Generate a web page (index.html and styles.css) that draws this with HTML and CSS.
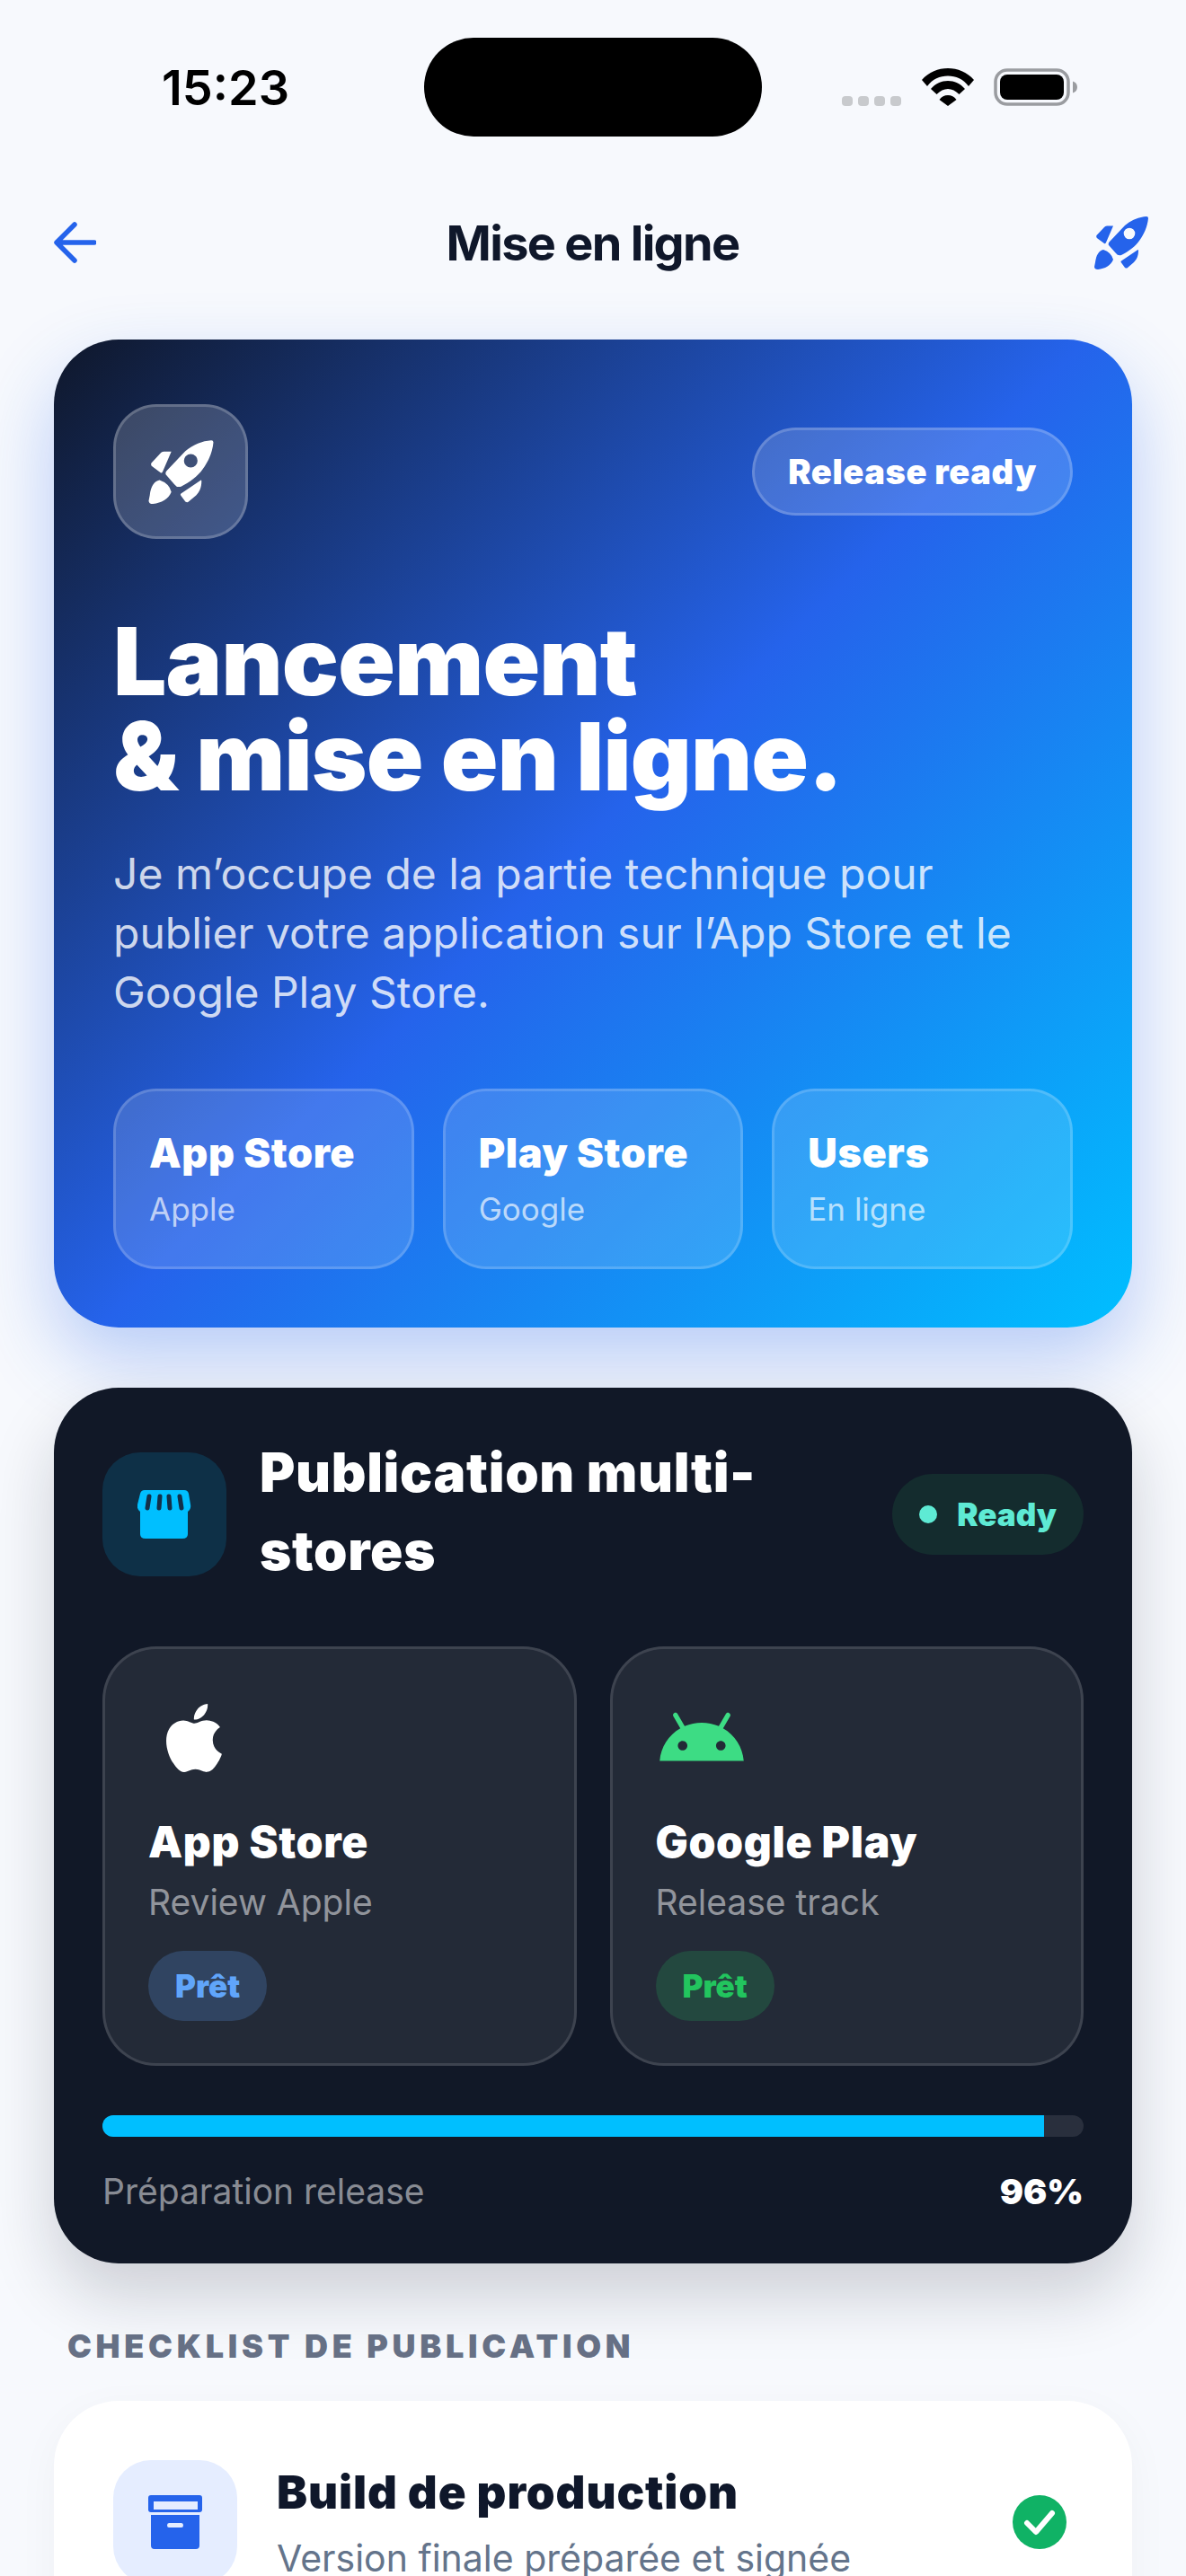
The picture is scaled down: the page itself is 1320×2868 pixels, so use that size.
FILE: index.html
```html
<!DOCTYPE html>
<html>

	<head>
		<meta charset="UTF-8">
		<title>Mise en ligne</title>
		<link rel="stylesheet" href="styles.css">
	</head>

	<body>
		<div class="status">
			<div class="time">15:23</div>
			<div class="island"></div>
			<div class="sys">
				<div class="dots"><i></i><i></i><i></i><i></i></div>
				<svg class="wifi" viewBox="0 0 58 42"><path d="M0 13C8 4 18 0 29 0s21 4 29 13l-6 7C46 12 38 8.500 29 8.500S12 12 6 20z"/><path d="M10 23c5-6 12-9 19-9s14 3 19 9l-6.500 6c-4-4-8-6-12.500-6s-8.500 2-12.500 6z"/><path d="M19.500 35c2.500-3.500 5.500-5 9.500-5s7 1.500 9.500 5L29 42z"/></svg>
				<svg class="battery" viewBox="0 0 93 42"><rect x="2" y="2" width="81" height="38" rx="13" fill="none" stroke="#9a9ca0" stroke-width="3.500"/><rect x="7" y="7" width="71" height="28" rx="8"/><path d="M88 14.500c3 1 5 3 5 6.500s-2 5.500-5 6.500z" fill="#9a9ca0"/></svg>
			</div>
		</div>

		<div class="nav">
			<svg class="back" viewBox="0 0 47 46"><path d="M45 23H4M23 3L3 23l20 20"/></svg>
			<div class="nav-title">Mise en ligne</div>
			<svg class="rocket nav-rocket" viewBox="0 0 60 60"><path fill-rule="evenodd" d="M58 1C50 1.500 41 5 34 11L17 29q-2 2-1 4l8 9q2 3 6 2C38 40 46 34 50 28C55 21 59 13 60 3q0-2-2-2zM39 13.700a6.300 6.300 0 1 1 0 12.600a6.300 6.300 0 1 1 0-12.600z"/><path d="M21 11.500H14q-2 0-3 1.500L2.500 22q-1 2 1 3.500L11 31q1 1 2-1zM48.500 38L30 50.500q-1 1 0 2L34 58q2 1 3 0L44 52C47 49 49 45 49 39q0-1-.5-1zM10 38C5 39 2 44 1 52L0 57Q0 60 4 60C12 59 18 56 21 49Q19 41 10 38z"/></svg>
		</div>

		<div class="hero">
			<div class="hero-top">
				<div class="hero-icon">
					<svg class="rocket" viewBox="0 0 60 60"><path fill-rule="evenodd" d="M58 1C50 1.500 41 5 34 11L17 29q-2 2-1 4l8 9q2 3 6 2C38 40 46 34 50 28C55 21 59 13 60 3q0-2-2-2zM39 13.700a6.300 6.300 0 1 1 0 12.600a6.300 6.300 0 1 1 0-12.600z"/><path d="M21 11.500H14q-2 0-3 1.500L2.500 22q-1 2 1 3.500L11 31q1 1 2-1zM48.500 38L30 50.500q-1 1 0 2L34 58q2 1 3 0L44 52C47 49 49 45 49 39q0-1-.5-1zM10 38C5 39 2 44 1 52L0 57Q0 60 4 60C12 59 18 56 21 49Q19 41 10 38z"/></svg>
				</div>
				<div class="hero-badge">Release ready</div>
			</div>
			<h1>Lancement<br>&amp; mise en ligne.</h1>
			<p class="hero-text">Je m’occupe de la partie technique pour publier votre application sur l’App Store et le Google Play Store.</p>
			<div class="stats">
				<div class="stat"><b>App Store</b><span>Apple</span></div>
				<div class="stat"><b>Play Store</b><span>Google</span></div>
				<div class="stat"><b>Users</b><span>En ligne</span></div>
			</div>
		</div>

		<div class="publish">
			<div class="pub-head">
				<div class="pub-icon">
					<svg viewBox="0 0 60 56"><path d="M8 1h44q4 0 5 4l2 12q1 5-3 8v25q0 5-6 5H9q-6 0-6-5V25q-4-3-3-8L3 5q1-4 5-4z"/><path class="slots" d="M13 8l-2 13M25 8l-1 13M35 8l1 13M47 8l2 13"/></svg>
				</div>
				<div class="pub-title">Publication multi-stores</div>
				<div class="ready"><i></i>Ready</div>
			</div>
			<div class="stores">
				<div class="store">
					<div class="store-icon">
						<svg class="apple" viewBox="0 0 24 24"><path d="M12.152 6.896c-.948 0-2.415-1.078-3.96-1.04-2.04.027-3.91 1.183-4.961 3.014-2.117 3.675-.546 9.103 1.519 12.09 1.013 1.454 2.208 3.09 3.792 3.039 1.52-.065 2.09-.987 3.935-.987 1.831 0 2.35.987 3.96.948 1.637-.026 2.676-1.48 3.676-2.948 1.156-1.688 1.636-3.325 1.662-3.415-.039-.013-3.182-1.221-3.22-4.857-.026-3.04 2.48-4.494 2.597-4.559-1.429-2.09-3.623-2.324-4.39-2.376-2-.156-3.675 1.09-4.61 1.09zM15.53 3.83c.843-1.012 1.4-2.427 1.245-3.83-1.207.052-2.662.805-3.532 1.818-.78.896-1.454 2.338-1.273 3.714 1.338.104 2.715-.688 3.559-1.701"/></svg>
					</div>
					<div class="store-name">App Store</div>
					<div class="store-sub">Review Apple</div>
					<div class="pill pill-blue">Prêt</div>
				</div>
				<div class="store">
					<div class="store-icon">
						<svg class="android" viewBox="0 0 24 24"><path d="M17.6 9.48l1.84-3.18c.16-.31.04-.69-.26-.85-.29-.15-.65-.06-.83.22l-1.88 3.24c-2.86-1.21-6.08-1.21-8.94 0L5.65 5.67c-.19-.29-.58-.38-.87-.2-.28.18-.37.54-.22.83L6.4 9.48C3.3 11.25 1.28 14.44 1 18h22c-.28-3.56-2.3-6.75-5.4-8.52zM7 15.25c-.69 0-1.25-.56-1.25-1.25s.56-1.25 1.25-1.25 1.25.56 1.25 1.25-.56 1.25-1.25 1.25zm10 0c-.69 0-1.25-.56-1.25-1.25s.56-1.25 1.25-1.25 1.25.56 1.25 1.25-.56 1.25-1.25 1.25z"/></svg>
					</div>
					<div class="store-name">Google Play</div>
					<div class="store-sub">Release track</div>
					<div class="pill pill-green">Prêt</div>
				</div>
			</div>
			<div class="progress"><div class="bar" style="width: 96%"></div></div>
			<div class="progress-row"><span>Préparation release</span><b>96%</b></div>
		</div>

		<div class="section-label">CHECKLIST DE PUBLICATION</div>

		<div class="checklist">
			<div class="check-row">
				<div class="check-icon">
					<svg viewBox="0 0 60 60"><path d="M3 0h54q3 0 3 3v13q0 3-3 3H3q-3 0-3-3V3q0-3 3-3zm3 7v9h49V7z" fill-rule="evenodd"/><path d="M3 22h54v34q0 4-4 4H7q-4 0-4-4zm20 9q-2 0-2 2.500t2 2.500h14q2 0 2-2.500T37 31z" fill-rule="evenodd"/></svg>
				</div>
				<div class="check-text">
					<div class="check-title">Build de production</div>
					<div class="check-sub">Version finale préparée et signée</div>
				</div>
				<svg class="tick" viewBox="0 0 60 60"><circle cx="30" cy="30" r="30"/><path d="M16 31l10 10 18-21"/></svg>
			</div>
		</div>
	</body>

</html>
```

FILE: styles.css
```css
* {
	margin: 0;
	padding: 0;
	box-sizing: border-box;
}

body {
	width: 1320px;
	height: 2868px;
	overflow: hidden;
	background: #f7f9fd;
	font-family: Inter, "Liberation Sans", sans-serif;
	color: #0f172a;
}

svg {
	display: block;
}

.status {
	display: grid;
	grid-template-columns: 1fr 376px 1fr;
	align-items: center;
	padding-top: 42px;
}

.time {
	padding-left: 180px;
	font-size: 54px;
	font-weight: 600;
	color: #000;
}

.island {
	height: 110px;
	border-radius: 55px;
	background: #000;
}

.sys {
	display: flex;
	align-items: flex-end;
	padding-left: 89px;
	height: 42px;
}

.dots {
	display: flex;
	gap: 6px;
	margin-right: 23px;
}

.dots i {
	width: 12px;
	height: 11px;
	border-radius: 4px;
	background: #c8cacd;
}

.wifi {
	width: 58px;
	height: 42px;
	margin-right: 22px;
}

.battery {
	width: 93px;
	height: 42px;
}

.nav {
	display: flex;
	align-items: center;
	justify-content: space-between;
	padding: 0 42px 0 60px;
	margin-top: 88px;
	height: 60px;
}

.back {
	width: 47px;
	height: 46px;
	fill: none;
	stroke: #2563eb;
	stroke-width: 5.500;
	stroke-linecap: round;
	stroke-linejoin: round;
}

.nav-title {
	margin-left: -6px;
	font-size: 54px;
	font-weight: 700;
	letter-spacing: -1.700px;
}

.nav-rocket {
	width: 60px;
	height: 60px;
	fill: #2563eb;
}

.hero {
	margin: 78px 60px 0;
	height: 1100px;
	padding: 72px 66px 0;
	border-radius: 72px;
	background: linear-gradient(135deg, #0f172a 0%, #2563eb 50%, #00bfff 100%);
	box-shadow: 0 36px 84px rgba(37, 99, 235, 0.3);
	color: #fff;
}

.hero-top {
	display: flex;
	justify-content: space-between;
}

.hero-icon {
	width: 150px;
	height: 150px;
	display: flex;
	align-items: center;
	justify-content: center;
	border: 3px solid rgba(255, 255, 255, 0.2);
	border-radius: 48px;
	background: rgba(255, 255, 255, 0.18);
}

.hero-icon .rocket {
	width: 73px;
	height: 72px;
	fill: #fff;
}

.hero-badge {
	margin-top: 26px;
	height: 98px;
	padding: 0 37px;
	display: flex;
	align-items: center;
	border: 3px solid rgba(255, 255, 255, 0.18);
	border-radius: 49px;
	background: rgba(255, 255, 255, 0.16);
	font-size: 38px;
	font-weight: 900;
	letter-spacing: 0.6px;
}

h1 {
	margin-top: 83px;
	font-size: 105px;
	line-height: 106px;
	font-weight: 900;
	letter-spacing: -0.8px;
}

.hero-text {
	max-width: 1030px;
	margin-top: 45px;
	font-size: 48px;
	line-height: 66px;
	color: rgba(255, 255, 255, 0.8);
}

.stats {
	display: grid;
	grid-template-columns: repeat(3, 1fr);
	gap: 32px;
	margin-top: 74px;
}

.stat {
	height: 201px;
	padding: 42px 37px 0;
	border: 3px solid rgba(255, 255, 255, 0.16);
	border-radius: 48px;
	background: rgba(255, 255, 255, 0.14);
}

.stat b {
	display: block;
	font-size: 45px;
	line-height: 54px;
	font-weight: 900;
	letter-spacing: 0.6px;
}

.stat span {
	display: block;
	margin-top: 14px;
	font-size: 35px;
	line-height: 42px;
	color: rgba(255, 255, 255, 0.68);
}

.publish {
	margin: 67px 60px 0;
	height: 975px;
	padding: 51px 54px 54px;
	border-radius: 72px;
	background: #111827;
	box-shadow: 0 36px 72px rgba(17, 24, 39, 0.18);
	color: #fff;
}

.pub-head {
	display: flex;
	align-items: center;
}

.pub-icon {
	flex: none;
	width: 138px;
	height: 138px;
	display: flex;
	align-items: center;
	justify-content: center;
	border-radius: 42px;
	background: rgba(0, 191, 255, 0.15);
}

.pub-icon svg {
	width: 60px;
	height: 56px;
	fill: #00bfff;
}

.slots {
	fill: none;
	stroke: #12304a;
	stroke-width: 5;
	stroke-linecap: round;
}

.pub-title {
	flex: 1;
	margin: 0 30px 0 37px;
	padding-bottom: 6px;
	font-size: 60px;
	line-height: 87px;
	font-weight: 900;
	letter-spacing: 0.7px;
}

.ready {
	display: flex;
	align-items: center;
	height: 90px;
	padding: 0 30px;
	border-radius: 45px;
	background: #142c2e;
	font-size: 35px;
	font-weight: 900;
	color: #5eead4;
}

.ready i {
	width: 20px;
	height: 20px;
	margin-right: 22px;
	border-radius: 50%;
	background: #5eead4;
}

.stores {
	display: grid;
	grid-template-columns: 1fr 1fr;
	gap: 37px;
	margin-top: 57px;
}

.store {
	height: 467px;
	padding: 48px;
	border: 3px solid rgba(255, 255, 255, 0.12);
	border-radius: 60px;
	background: rgba(255, 255, 255, 0.08);
}

.store-icon {
	width: 102px;
	height: 102px;
	display: flex;
	align-items: center;
	justify-content: center;
}

.apple {
	width: 76px;
	height: 76px;
	fill: #fff;
}

.android {
	width: 102px;
	height: 102px;
	fill: #3ddc84;
}

.store-name {
	margin-top: 35px;
	font-size: 48px;
	line-height: 60px;
	font-weight: 900;
	letter-spacing: 0.7px;
}

.store-sub {
	margin-top: 14px;
	font-size: 39px;
	line-height: 46px;
	color: rgba(255, 255, 255, 0.52);
}

.pill {
	display: inline-flex;
	align-items: center;
	height: 78px;
	margin-top: 31px;
	padding: 0 30px;
	border-radius: 39px;
	font-size: 35px;
	font-weight: 900;
}

.pill-blue {
	background: rgba(96, 165, 250, 0.22);
	color: #60a5fa;
}

.pill-green {
	background: rgba(34, 197, 94, 0.2);
	color: #22c55e;
}

.progress {
	height: 24px;
	margin-top: 55px;
	border-radius: 12px;
	overflow: hidden;
	background: rgba(255, 255, 255, 0.1);
}

.bar {
	height: 24px;
	background: #00bfff;
}

.progress-row {
	display: flex;
	justify-content: space-between;
	margin-top: 37px;
	line-height: 48px;
	font-size: 39px;
	color: rgba(255, 255, 255, 0.52);
}

.progress-row b {
	font-weight: 900;
	color: #fff;
}

.section-label {
	margin: 70px 0 39px 75px;
	line-height: 44px;
	font-size: 36px;
	font-weight: 900;
	letter-spacing: 4.700px;
	color: #667085;
}

.checklist {
	margin: 0 60px;
	height: 300px;
	padding: 66px;
	border-radius: 72px;
	background: #fff;
	box-shadow: 0 12px 48px rgba(15, 23, 42, 0.04);
}

.check-row {
	display: flex;
	align-items: center;
}

.check-icon {
	flex: none;
	width: 138px;
	height: 138px;
	display: flex;
	align-items: center;
	justify-content: center;
	border-radius: 42px;
	background: #e5edff;
}

.check-icon svg {
	width: 60px;
	height: 60px;
	fill: #2563eb;
}

.check-text {
	flex: 1;
	margin-left: 44px;
	padding-top: 4px;
}

.check-title {
	font-size: 51px;
	line-height: 62px;
	font-weight: 900;
	letter-spacing: 0.9px;
}

.check-sub {
	margin-top: 14px;
	font-size: 41px;
	line-height: 56px;
	color: #64748b;
}

.tick {
	flex: none;
	width: 60px;
	height: 60px;
	margin-right: 7px;
}

.tick circle {
	fill: #10b265;
}

.tick path {
	fill: none;
	stroke: #fff;
	stroke-width: 6;
	stroke-linecap: round;
	stroke-linejoin: round;
}
```
